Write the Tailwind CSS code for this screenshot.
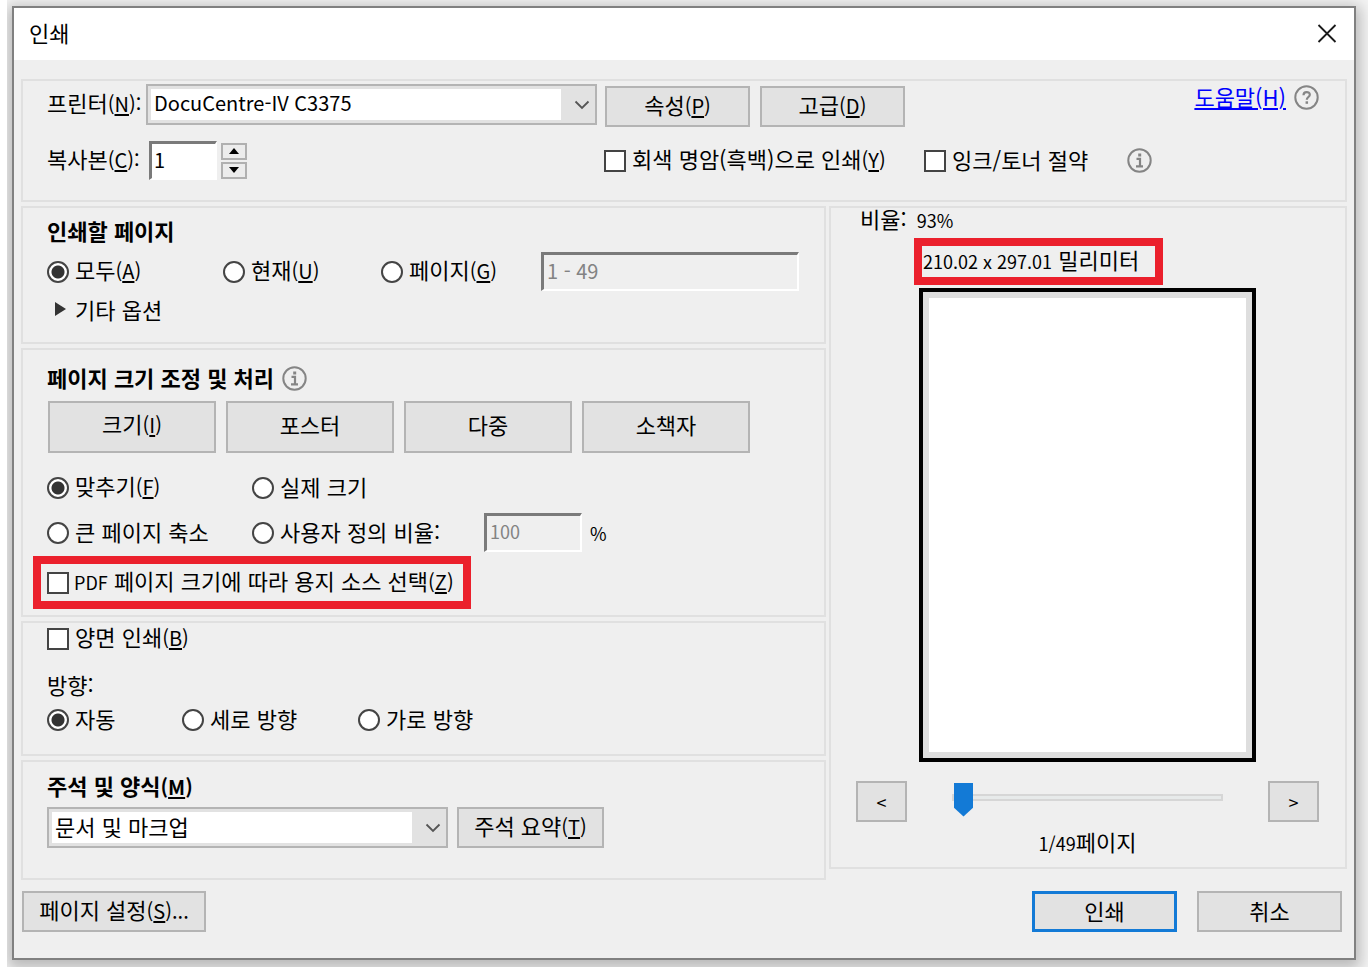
<!DOCTYPE html>
<html lang="ko">
<head>
<meta charset="utf-8">
<title>인쇄</title>
<script src="https://cdn.jsdelivr.net/npm/@tailwindcss/browser@4"></script>
</head>
<body class="bg-white pl-[7px] text-[22px] leading-6 text-black font-['Noto_Sans_CJK_KR',sans-serif]">
<div class="overflow-hidden bg-[#f4f4f4] pt-[6px] pr-[12px] pb-[7px] pl-[5px]">
<main class="border-2 border-[#808080] bg-[#efefef] shadow-[0_4px_14px_4px_rgba(0,0,0,0.25)]">
  <header class="flex h-[52px] items-center justify-between bg-white pr-[17px] pl-[15px]">
    <h1 class="pb-[5px]">인쇄</h1>
    <button type="button" aria-label="닫기">
      <svg class="block size-5" viewBox="0 0 20 20" fill="none" stroke="#1a1a1a" stroke-width="1.8"><path d="M1.500 1 18.500 18M18.500 1 1.500 18"/></svg>
    </button>
  </header>

  <form class="px-[7px] pt-[19px] pb-[26px]">
    <section class="h-[123px] border-2 border-[#e0e0e0] pr-[26px] pl-6">
      <div class="flex items-start pt-[3px]">
        <label for="printer" class="w-[99px] shrink-0 pt-[6px] whitespace-nowrap">프린터<span class="text-xl leading-6">(<u class="underline-offset-2">N</u>):</span></label>
        <div class="relative w-[451px]">
          <div class="border-2 border-[#b4b4b4] bg-[#e2e2e2] p-[3px]">
            <select id="printer" class="block h-[31px] w-full appearance-none border-r-[31px] border-[#e2e2e2] bg-white pb-1 pl-[3px] text-xl"><option>DocuCentre-IV C3375</option></select>
          </div>
          <svg class="pointer-events-none absolute top-[16px] right-[7px] h-[10px] w-4" viewBox="0 0 16 10" fill="none" stroke="#555" stroke-width="1.800"><path d="M1.500 1.500 8 8 14.500 1.500"/></svg>
        </div>
        <button type="button" class="mt-[2px] ml-2 h-[41px] w-[145px] border-2 border-[#b4b4b4] bg-[#e2e2e2] pb-1">속성<span class="text-xl leading-6">(<u class="underline-offset-2">P</u>)</span></button>
        <button type="button" class="mt-[2px] ml-[10px] h-[41px] w-[145px] border-2 border-[#b4b4b4] bg-[#e2e2e2] pb-1">고급<span class="text-xl leading-6">(<u class="underline-offset-2">D</u>)</span></button>
        <a href="#" class="ml-auto text-[#0000ff] underline decoration-2 underline-offset-2">도움말(H)</a>
        <svg class="mt-px ml-2 size-[25px] shrink-0" viewBox="0 0 25 25" fill="none" stroke="#858585"><circle cx="12.500" cy="12.500" r="11.200" stroke-width="2"/><path d="M9.500 10.200c0-4.200 6.300-4 6.300-.5 0 2.200-3 2.400-3 5" stroke-width="2.200"/><path d="M12.800 16.300v2.500" stroke-width="2.500"/></svg>
      </div>
      <div class="mt-[14px] flex items-center">
        <label for="copies" class="-mt-0.5 w-[102px] shrink-0 pb-0.5 whitespace-nowrap">복사본<span class="text-xl leading-6">(<u class="underline-offset-2">C</u>):</span></label>
        <input id="copies" value="1" class="h-[39px] w-[68px] border-t-3 border-r-2 border-b-2 border-l-3 border-t-[#7a7a7a] border-r-white border-b-white border-l-[#7a7a7a] bg-white pb-1 pl-[2px] text-xl">
        <div class="ml-1 flex flex-col gap-[2px]">
          <button type="button" aria-label="늘리기" class="flex h-[17px] w-[26px] items-center justify-center border-2 border-[#b0b0b0] bg-[#ececec]"><svg class="h-[6px] w-[10px]" viewBox="0 0 10 6"><path d="M5 0 10 6H0z"/></svg></button>
          <button type="button" aria-label="줄이기" class="flex h-[17px] w-[26px] items-center justify-center border-2 border-[#b0b0b0] bg-[#ececec]"><svg class="h-[6px] w-[10px]" viewBox="0 0 10 6"><path d="M5 6 10 0H0z"/></svg></button>
        </div>
        <label class="ml-[357px] flex w-[284px] items-center gap-[6px] whitespace-nowrap"><input type="checkbox" class="size-[22px] shrink-0 appearance-none border-2 border-[#444] bg-white checked:bg-[#333]"><span class="-mt-0.5 pb-0.5">회색 명암(흑백)으로 인쇄<span class="text-xl leading-6">(<u class="underline-offset-2">Y</u>)</span></span></label>
        <label class="ml-9 flex items-center gap-[6px] whitespace-nowrap"><input type="checkbox" class="size-[22px] shrink-0 appearance-none border-2 border-[#444] bg-white checked:bg-[#333]"><span class="-mt-0.5 pb-0.5">잉크/토너 절약</span></label>
        <svg class="ml-[39px] size-[25px] shrink-0" viewBox="0 0 25 25" fill="none" stroke="#858585"><circle cx="12.500" cy="12.500" r="11.200" stroke-width="2"/><path d="M9.500 10.800h3.500v7.500M9 18.300h7" stroke-width="2.200"/><path d="M12.700 5.500v3" stroke-width="3"/></svg>
      </div>
    </section>

    <div class="mt-[4px] grid grid-cols-[805fr_518fr] items-start gap-[3px]">
      <div class="flex min-w-0 flex-col gap-[4px]">
        <section class="h-[138px] border-2 border-[#e0e0e0] pt-[10px] pl-6">
          <h2 class="font-bold">인쇄할 페이지</h2>
          <div class="mt-[10px] flex items-center">
            <label class="flex w-[176px] items-center gap-[6px] whitespace-nowrap"><input type="radio" name="range" checked class="size-[22px] shrink-0 appearance-none rounded-full border-2 border-[#444] bg-white checked:bg-[radial-gradient(circle,#333_6px,#fff_7px)]"><span class="-mt-0.5 pb-0.5">모두<span class="text-xl leading-6">(<u class="underline-offset-2">A</u>)</span></span></label>
            <label class="flex w-[158px] items-center gap-[6px] whitespace-nowrap"><input type="radio" name="range" class="size-[22px] shrink-0 appearance-none rounded-full border-2 border-[#444] bg-white checked:bg-[radial-gradient(circle,#333_6px,#fff_7px)]"><span class="-mt-0.5 pb-0.5">현재<span class="text-xl leading-6">(<u class="underline-offset-2">U</u>)</span></span></label>
            <label class="flex w-[160px] items-center gap-[6px] whitespace-nowrap"><input type="radio" name="range" class="size-[22px] shrink-0 appearance-none rounded-full border-2 border-[#444] bg-white checked:bg-[radial-gradient(circle,#333_6px,#fff_7px)]"><span class="-mt-0.5 pb-0.5">페이지<span class="text-xl leading-6">(<u class="underline-offset-2">G</u>)</span></span></label>
            <input aria-label="페이지 범위" disabled value="1 - 49" class="h-[39px] w-[258px] border-t-3 border-r-2 border-b-2 border-l-3 border-t-[#7a7a7a] border-r-white border-b-white border-l-[#7a7a7a] pb-1 pl-[3px] text-xl text-[#838383]">
          </div>
          <button type="button" class="mt-[6px] ml-2 flex items-center gap-[9px]"><svg class="h-[14px] w-[11px]" viewBox="0 0 11 14"><path d="M0 0 11 7 0 14z" fill="#333"/></svg>기타 옵션</button>
        </section>

        <section class="h-[269px] border-2 border-[#e0e0e0] pt-[16px] pl-[10px]">
          <div class="flex items-center gap-2 pl-[14px]">
            <h2 class="-mt-0.5 pb-0.5 font-bold">페이지 크기 조정 및 처리</h2>
            <svg class="size-[25px] shrink-0" viewBox="0 0 25 25" fill="none" stroke="#858585"><circle cx="12.500" cy="12.500" r="11.200" stroke-width="2"/><path d="M9.500 10.800h3.500v7.500M9 18.300h7" stroke-width="2.200"/><path d="M12.700 5.500v3" stroke-width="3"/></svg>
          </div>
          <div class="mt-[10px] flex gap-[10px] pl-[15px]">
            <button type="button" class="h-[52px] w-[168px] border-2 border-[#b4b4b4] bg-[#e2e2e2] pb-[6px]">크기<span class="text-xl leading-6">(<u class="underline-offset-2">I</u>)</span></button>
            <button type="button" class="h-[52px] w-[168px] border-2 border-[#b4b4b4] bg-[#e2e2e2] pb-[6px]">포스터</button>
            <button type="button" class="h-[52px] w-[168px] border-2 border-[#b4b4b4] bg-[#e2e2e2] pb-[6px]">다중</button>
            <button type="button" class="h-[52px] w-[168px] border-2 border-[#b4b4b4] bg-[#e2e2e2] pb-[6px]">소책자</button>
          </div>
          <div class="mt-[22px] flex items-center pl-[14px]">
            <label class="flex w-[205px] items-center gap-[6px] whitespace-nowrap"><input type="radio" name="size" checked class="size-[22px] shrink-0 appearance-none rounded-full border-2 border-[#444] bg-white checked:bg-[radial-gradient(circle,#333_6px,#fff_7px)]"><span class="-mt-0.5 pb-0.5">맞추기<span class="text-xl leading-6">(<u class="underline-offset-2">F</u>)</span></span></label>
            <label class="flex items-center gap-[6px] whitespace-nowrap"><input type="radio" name="size" class="size-[22px] shrink-0 appearance-none rounded-full border-2 border-[#444] bg-white checked:bg-[radial-gradient(circle,#333_6px,#fff_7px)]"><span class="-mt-0.5 pb-0.5">실제 크기</span></label>
          </div>
          <div class="mt-3 flex items-center pl-[14px]">
            <label class="flex w-[205px] items-center gap-[6px] whitespace-nowrap"><input type="radio" name="size" class="size-[22px] shrink-0 appearance-none rounded-full border-2 border-[#444] bg-white checked:bg-[radial-gradient(circle,#333_6px,#fff_7px)]"><span class="-mt-0.5 pb-0.5">큰 페이지 축소</span></label>
            <label class="flex w-[232px] items-center gap-[6px] whitespace-nowrap"><input type="radio" name="size" class="size-[22px] shrink-0 appearance-none rounded-full border-2 border-[#444] bg-white checked:bg-[radial-gradient(circle,#333_6px,#fff_7px)]"><span class="-mt-0.5 pb-0.5">사용자 정의 비율:</span></label>
            <input id="ratio" aria-label="사용자 정의 비율" disabled value="100" class="h-[39px] w-[98px] border-t-3 border-r-2 border-b-2 border-l-3 border-t-[#7a7a7a] border-r-white border-b-white border-l-[#7a7a7a] pb-1 pl-[3px] text-lg text-[#838383]">
            <label for="ratio" class="ml-2 text-lg">%</label>
          </div>
          <label class="mt-[4px] flex h-[53px] w-[438px] items-center gap-[5px] border-8 border-[#eb202c] pl-[6px] whitespace-nowrap"><input type="checkbox" class="size-[22px] shrink-0 appearance-none border-2 border-[#444] bg-white checked:bg-[#333]"><span class="-mt-0.5 pb-0.5"><span class="text-lg leading-6">PDF</span> 페이지 크기에 따라 용지 소스 선택<span class="text-xl leading-6">(<u class="underline-offset-2">Z</u>)</span></span></label>
        </section>

        <section class="h-[135px] border-2 border-[#e0e0e0] pt-[3px] pl-6">
          <label class="flex w-fit items-center gap-[6px]"><input type="checkbox" class="size-[22px] shrink-0 appearance-none border-2 border-[#444] bg-white checked:bg-[#333]"><span class="-mt-0.5 pb-0.5">양면 인쇄<span class="text-xl leading-6">(<u class="underline-offset-2">B</u>)</span></span></label>
          <p class="mt-5">방향:</p>
          <div class="mt-3 flex">
            <label class="flex w-[135px] items-center gap-[6px] whitespace-nowrap"><input type="radio" name="orient" checked class="size-[22px] shrink-0 appearance-none rounded-full border-2 border-[#444] bg-white checked:bg-[radial-gradient(circle,#333_6px,#fff_7px)]"><span class="-mt-0.5 pb-0.5">자동</span></label>
            <label class="flex w-[176px] items-center gap-[6px] whitespace-nowrap"><input type="radio" name="orient" class="size-[22px] shrink-0 appearance-none rounded-full border-2 border-[#444] bg-white checked:bg-[radial-gradient(circle,#333_6px,#fff_7px)]"><span class="-mt-0.5 pb-0.5">세로 방향</span></label>
            <label class="flex items-center gap-[6px] whitespace-nowrap"><input type="radio" name="orient" class="size-[22px] shrink-0 appearance-none rounded-full border-2 border-[#444] bg-white checked:bg-[radial-gradient(circle,#333_6px,#fff_7px)]"><span class="-mt-0.5 pb-0.5">가로 방향</span></label>
          </div>
        </section>

        <section class="h-[120px] border-2 border-[#e0e0e0] pt-[11px] pl-6">
          <label for="markup" class="block font-bold">주석 및 양식<span class="text-xl leading-6">(<u class="underline-offset-2">M</u>)</span></label>
          <div class="mt-2 flex items-center gap-[9px]">
            <div class="relative w-[401px]">
              <div class="border-2 border-[#b4b4b4] bg-[#e2e2e2] p-[3px]">
                <select id="markup" class="block h-[31px] w-full appearance-none border-r-[31px] border-[#e2e2e2] bg-white pb-1 pl-[3px]"><option>문서 및 마크업</option></select>
              </div>
              <svg class="pointer-events-none absolute top-[16px] right-[7px] h-[10px] w-4" viewBox="0 0 16 10" fill="none" stroke="#555" stroke-width="1.800"><path d="M1.500 1.500 8 8 14.500 1.500"/></svg>
            </div>
            <button type="button" class="h-[41px] w-[147px] border-2 border-[#b4b4b4] bg-[#e2e2e2] pb-1">주석 요약<span class="text-xl leading-6">(<u class="underline-offset-2">T</u>)</span></button>
          </div>
        </section>
      </div>

      <section class="h-[663px] min-w-0 border-2 border-[#e0e0e0] pr-[26px] pl-[25px]">
        <p class="-mt-0.5 pl-1">비율: <span class="ml-1 text-lg leading-6">93%</span></p>
        <p class="mt-[6px] ml-[58px] flex h-[47px] w-[249px] items-center border-8 border-[#eb202c] pb-1 pl-px whitespace-nowrap"><span><span class="text-lg leading-6">210.02 x 297.01</span> 밀리미터</span></p>
        <div class="mt-[3px] ml-[63px] h-[474px] w-[337px] border-4 border-black bg-[#dedede] p-[6px]"><div class="h-full bg-white"></div></div>
        <div class="mt-[19px] flex items-start justify-between">
          <button type="button" aria-label="이전 페이지" class="h-[41px] w-[51px] border-2 border-[#b4b4b4] bg-[#e2e2e2] text-lg">&lt;</button>
          <input type="range" min="1" max="49" value="1" aria-label="페이지" class="h-8 w-[271px] appearance-none bg-transparent [&::-webkit-slider-runnable-track]:h-[7px] [&::-webkit-slider-runnable-track]:border-2 [&::-webkit-slider-runnable-track]:border-[#d6d6d6] [&::-webkit-slider-runnable-track]:bg-[#e7eaea] [&::-webkit-slider-thumb]:mt-[-13px] [&::-webkit-slider-thumb]:h-[34px] [&::-webkit-slider-thumb]:w-[19px] [&::-webkit-slider-thumb]:appearance-none [&::-webkit-slider-thumb]:bg-[#137ad6] [&::-webkit-slider-thumb]:[clip-path:polygon(0_0,100%_0,100%_74%,50%_100%,0_74%)]">
          <button type="button" aria-label="다음 페이지" class="h-[41px] w-[51px] border-2 border-[#b4b4b4] bg-[#e2e2e2] text-lg">&gt;</button>
        </div>
        <p class="mt-[7px] text-center"><span class="text-lg leading-6">1/49</span>페이지</p>
      </section>
    </div>

    <footer class="mt-[11px] flex pr-[5px]">
      <button type="button" class="ml-px h-[41px] w-[184px] border-2 border-[#b4b4b4] bg-[#e2e2e2] pb-1">페이지 설정<span class="text-xl leading-6">(<u class="underline-offset-2">S</u>)...</span></button>
      <button type="submit" class="ml-auto h-[41px] w-[145px] border-3 border-[#137ad6] bg-[#e2e2e2] pb-1">인쇄</button>
      <button type="button" class="ml-5 h-[41px] w-[145px] border-2 border-[#b4b4b4] bg-[#e2e2e2] pb-1">취소</button>
    </footer>
  </form>
</main>
</div>
</body>
</html>
